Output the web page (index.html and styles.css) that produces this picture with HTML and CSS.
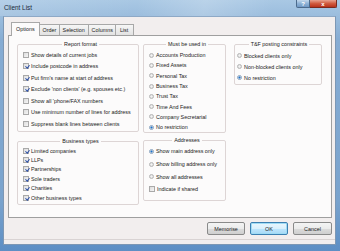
FILE: index.html
```html
<!doctype html>
<html>
    <head>
        <meta charset="utf-8" />
        <title>Client List</title>
        <link rel="stylesheet" href="styles.css">
    </head>
    <body>
        <div id="window">
            <div class="titlebar">
                <span class="title">Client List</span>
                <div class="caption">
                    <span class="cap help">?</span>
                    <span class="cap close">x</span>
                </div>
            </div>

            <div class="client">
                <div class="tabs">
                    <span class="tab active">Options</span>
                    <span class="tab">Order</span>
                    <span class="tab">Selection</span>
                    <span class="tab">Columns</span>
                    <span class="tab">List</span>
                </div>

                <div class="panel">
                    <div class="col col-left">
                        <fieldset class="group report">
                            <legend>Report format</legend>
                            <div class="row"><span class="check"></span>Show details of current jobs</div>
                            <div class="row"><span class="check on"></span>Include postcode in address</div>
                            <div class="row"><span class="check on"></span>Put firm's name at start of address</div>
                            <div class="row"><span class="check on"></span>Exclude 'non clients' (e.g. spouses etc.)</div>
                            <div class="row"><span class="check"></span>Show all 'phone/FAX numbers</div>
                            <div class="row"><span class="check"></span>Use minimum number of lines for address</div>
                            <div class="row"><span class="check"></span>Suppress blank lines between clients</div>
                        </fieldset>

                        <fieldset class="group business">
                            <legend>Business types</legend>
                            <div class="row"><span class="check on"></span>Limited companies</div>
                            <div class="row"><span class="check on"></span>LLPs</div>
                            <div class="row"><span class="check on"></span>Partnerships</div>
                            <div class="row"><span class="check on"></span>Sole traders</div>
                            <div class="row"><span class="check on"></span>Charities</div>
                            <div class="row"><span class="check on"></span>Other business types</div>
                        </fieldset>
                    </div>

                    <div class="col col-mid">
                        <fieldset class="group used">
                            <legend>Must be used in</legend>
                            <div class="row"><span class="radio"></span>Accounts Production</div>
                            <div class="row"><span class="radio"></span>Fixed Assets</div>
                            <div class="row"><span class="radio"></span>Personal Tax</div>
                            <div class="row"><span class="radio"></span>Business Tax</div>
                            <div class="row"><span class="radio"></span>Trust Tax</div>
                            <div class="row"><span class="radio"></span>Time And Fees</div>
                            <div class="row"><span class="radio"></span>Company Secretarial</div>
                            <div class="row"><span class="radio on"></span>No restriction</div>
                        </fieldset>

                        <fieldset class="group addresses">
                            <legend>Addresses</legend>
                            <div class="row"><span class="radio on"></span>Show main address only</div>
                            <div class="row"><span class="radio"></span>Show billing address only</div>
                            <div class="row"><span class="radio"></span>Show all addresses</div>
                            <div class="row"><span class="check"></span>Indicate if shared</div>
                        </fieldset>
                    </div>

                    <div class="col col-right">
                        <fieldset class="group posting">
                            <legend>T&amp;F posting constraints</legend>
                            <div class="row"><span class="radio"></span>Blocked clients only</div>
                            <div class="row"><span class="radio"></span>Non-blocked clients only</div>
                            <div class="row"><span class="radio on"></span>No restriction</div>
                        </fieldset>
                    </div>
                </div>

                <div class="buttons">
                    <button class="button">Memorise</button>
                    <button class="button default">OK</button>
                    <button class="button">Cancel</button>
                </div>

                <div class="status"></div>
            </div>
        </div>
    </body>
</html>
```

FILE: styles.css
```css
* {
    margin: 0;
    padding: 0;
    box-sizing: border-box;
    font-family: "Liberation Sans", Arial, sans-serif;
}

html, body {
    width: 340px;
    height: 251px;
    overflow: hidden;
}

body {
    background: #5f8fc2;
}

#window {
    width: 340px;
    height: 251px;
    display: flex;
    flex-direction: column;
    background: linear-gradient(to bottom, #a9c8e4 0, #86acd3 40px, #7aa3cd 200px, #5d8ec4 251px);
}

.titlebar {
    height: 16px;
    display: flex;
    justify-content: space-between;
    padding-left: 4px;
    background: linear-gradient(100deg, rgba(255,255,255,0.15) 0, rgba(255,255,255,0) 40%, rgba(255,255,255,0.2) 60%, rgba(255,255,255,0) 80%);
}

.title {
    font-size: 6.4px;
    line-height: 16px;
    color: #1a2a3a;
}

.caption {
    display: flex;
    height: 8px;
    margin-right: 3px;
}

.cap {
    height: 8px;
    font-size: 6px;
    line-height: 8px;
    text-align: center;
    color: white;
    font-weight: bold;
    border: 1px solid #4b6a8c;
    border-top: none;
}

.help {
    width: 14px;
    border-radius: 0 0 0 2px;
    background: linear-gradient(to bottom, #c3d8ec, #8eb2d6 50%, #6f98c4);
}

.close {
    width: 27px;
    border-left: none;
    border-color: #7a2a1e;
    border-radius: 0 0 2px 0;
    background: linear-gradient(to bottom, #e8a290, #d15b3f 50%, #b8331c);
}

.client {
    flex: 1;
    margin: 0 4px 6px 3px;
    background: #f2eeee;
    border: 1px solid #7d97b4;
    border-top-color: #8ea9c6;
    display: flex;
    flex-direction: column;
}

.tabs {
    height: 16px;
    display: flex;
    align-items: flex-end;
    padding-left: 8px;
    margin-top: 2px;
    position: relative;
    z-index: 1;
}

.tab {
    height: 11px;
    font-size: 5.4px;
    line-height: 10px;
    color: #222;
    padding: 0 3px;
    border: 1px solid #a8a8a8;
    border-bottom: none;
    margin-right: -1px;
    background: linear-gradient(to bottom, #f6f6f6, #e2e2e2);
}

.tab.active {
    height: 14px;
    background: #fcfbfb;
    line-height: 12px;
    margin: 0 -1px 0 -1px;
    padding: 0 4px;
    position: relative;
    top: 1px;
}

.tab:nth-child(2) { width: 21px; }
.tab:nth-child(3) { width: 30px; }
.tab:nth-child(4) { width: 28px; }
.tab:nth-child(5) { width: 19px; text-align: center; }

.panel {
    height: 183px;
    margin: 0 3px 0 4px;
    background: #fcfbfb;
    border: 1px solid #9f9f9f;
    display: flex;
    gap: 4px;
    padding: 5px 0 0 8px;
}

.col {
    display: flex;
    flex-direction: column;
}

.col-left { width: 122px; gap: 6px; }
.col-mid { width: 83px; gap: 4px; margin-right: 4px; }
.col-right { width: 88px; }

.group {
    border: 1px solid #ddd5d5;
    border-radius: 2px;
    font-size: 5.4px;
    color: #222;
}

.group legend {
    margin: 0 auto;
    padding: 0 2px;
    line-height: 7px;
    font-size: 5.4px;
}

.row {
    display: flex;
    align-items: center;
    white-space: nowrap;
}

.report { height: 91px; padding: 1px 0 0 5px; }
.report .row { height: 11.5px; }

.business { height: 67px; padding: 1px 0 0 5px; }
.business .row { height: 9.4px; }

.used { height: 92px; padding: 2px 0 0 5px; }
.used .row { height: 10.3px; }

.addresses { height: 64px; padding: 1px 0 0 5px; }
.addresses .row { height: 12.7px; }

.posting { height: 44px; padding: 2px 0 0 2px; }
.posting .row { height: 11px; }

.check {
    width: 6px;
    height: 6px;
    margin-right: 2px;
    border: 1px solid #a9a9a9;
    background: linear-gradient(135deg, #dcdcdc, #f6f6f6);
    position: relative;
    flex-shrink: 0;
}

.check.on::after {
    content: "";
    position: absolute;
    left: 1.5px;
    top: 0;
    width: 1.5px;
    height: 3.2px;
    border: solid #2a4fa8;
    border-width: 0 1.1px 1.1px 0;
    transform: rotate(40deg);
}

.radio {
    width: 5px;
    height: 5px;
    margin-right: 2px;
    border: 1px solid #b5b5b5;
    border-radius: 50%;
    background: radial-gradient(circle, #f4f4f4, #d8d8d8);
    flex-shrink: 0;
}

.radio.on {
    background: radial-gradient(circle, #1f6fc4 0, #3a86d4 40%, #e4e4e4 60%);
    border-color: #8aa4c0;
}

.buttons {
    display: flex;
    justify-content: flex-end;
    gap: 5px;
    padding: 4px 3px 0 0;
    height: 18px;
}

.button {
    width: 38px;
    height: 13px;
    font-size: 5.4px;
    color: #222;
    border: 1px solid #8a8a8a;
    border-radius: 2px;
    background: linear-gradient(to bottom, #f4f4f4 0, #ebebeb 50%, #dcdcdc 51%, #cfcfcf 100%);
}

.button:last-child {
    width: 39px;
}

.button.default {
    border-color: #3c7fb1;
    box-shadow: inset 0 0 0 1px #9fdcf5;
    background: linear-gradient(to bottom, #eaf6fd 0, #d9f0fc 50%, #bee6fd 51%, #a7d9f5 100%);
}

.status {
    flex: 1;
    margin-top: 3px;
    border-top: 1px solid #d9d3d3;
}
```
